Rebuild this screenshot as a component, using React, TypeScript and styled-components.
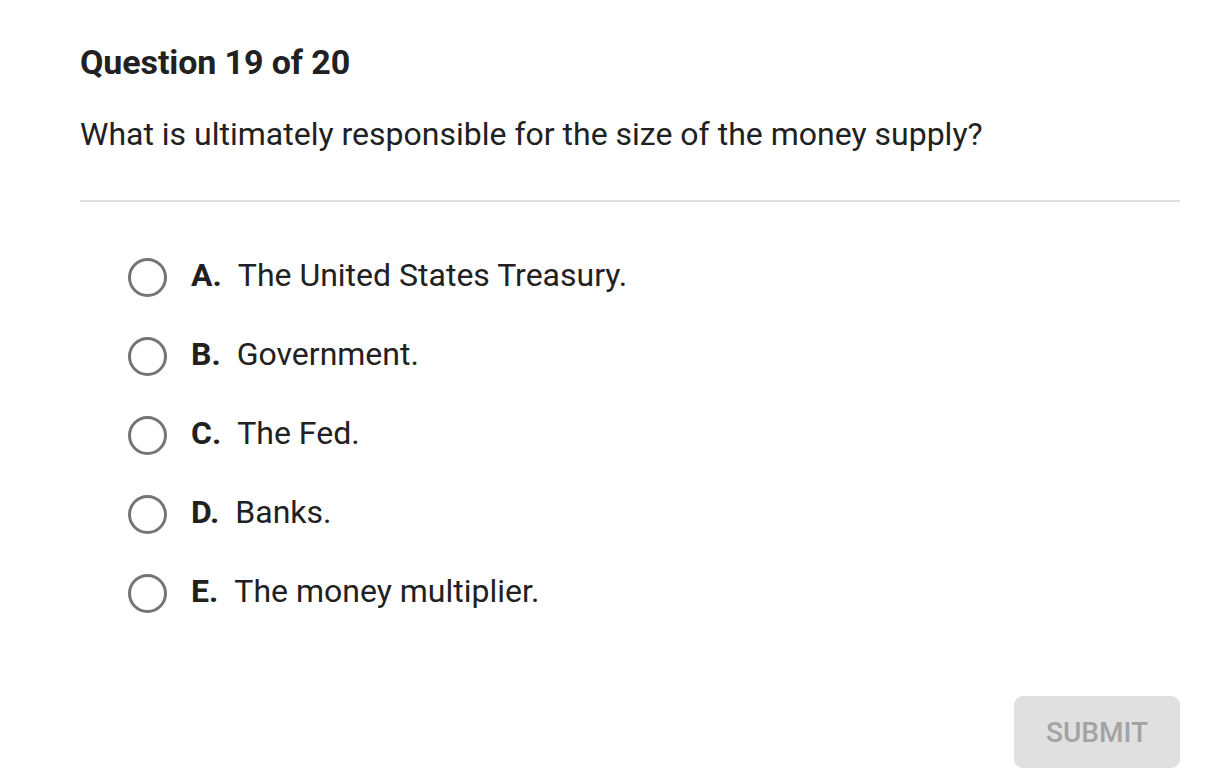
import styled, { createGlobalStyle } from "styled-components"

const GlobalStyle = createGlobalStyle`
  body {
    margin: 0;
    background: #fff;
    font-family: Roboto, "Liberation Sans", sans-serif;
    color: #212121;
  }
`

const options = [
    { letter: "A.", text: "The United States Treasury." },
    { letter: "B.", text: "Government." },
    { letter: "C.", text: "The Fed." },
    { letter: "D.", text: "Banks." },
    { letter: "E.", text: "The money multiplier." },
]

export default function App() {
    return (
        <>
            <GlobalStyle />
            <Wrapper>
                <Title>Question 19 of 20</Title>
                <Prompt>What is ultimately responsible for the size of the money supply?</Prompt>
                <Divider />
                <Options>
                    {options.map((o) => (
                        <Option key={o.letter}>
                            <Radio type="radio" name="answer" />
                            <AnswerText>
                                <Letter>{o.letter}</Letter>
                                {o.text}
                            </AnswerText>
                        </Option>
                    ))}
                </Options>
                <Footer>
                    <SubmitButton disabled>SUBMIT</SubmitButton>
                </Footer>
            </Wrapper>
        </>
    )
}

const Wrapper = styled.main`
    padding: 42px 26px 0 80px;
    display: flex;
    flex-direction: column;
`

const Title = styled.h1`
    margin: 0;
    font-size: 34px;
    font-weight: 700;
    line-height: 40px;
    letter-spacing: -0.1px;
`

const Prompt = styled.p`
    margin: 32px 0 0;
    font-size: 32px;
    line-height: 40px;
`

const Divider = styled.hr`
    margin: 46px 0 0;
    border: none;
    height: 2px;
    background: #dedede;
`

const Options = styled.div`
    display: flex;
    flex-direction: column;
    gap: 39px;
    padding: 55px 0 0 48px;
`

const Option = styled.label`
    display: flex;
    align-items: center;
    height: 40px;
    font-size: 32px;
    cursor: pointer;
`

const Radio = styled.input`
    appearance: none;
    margin: 0 24px 0 0;
    width: 39px;
    height: 39px;
    border: 3px solid #757575;
    border-radius: 50%;
    box-sizing: border-box;
    cursor: pointer;
`

const AnswerText = styled.span`
    padding-bottom: 3px;
    line-height: 37px;
`

const Letter = styled.span`
    font-weight: 700;
    margin-right: 16px;
`

const Footer = styled.div`
    display: flex;
    justify-content: flex-end;
    margin-top: 83px;
`

const SubmitButton = styled.button`
    width: 166px;
    height: 72px;
    border: none;
    border-radius: 9px;
    background: #e0e0e0;
    color: #a3a3a3;
    font-family: Roboto, "Liberation Sans", sans-serif;
    font-size: 28px;
    font-weight: 500;
`
